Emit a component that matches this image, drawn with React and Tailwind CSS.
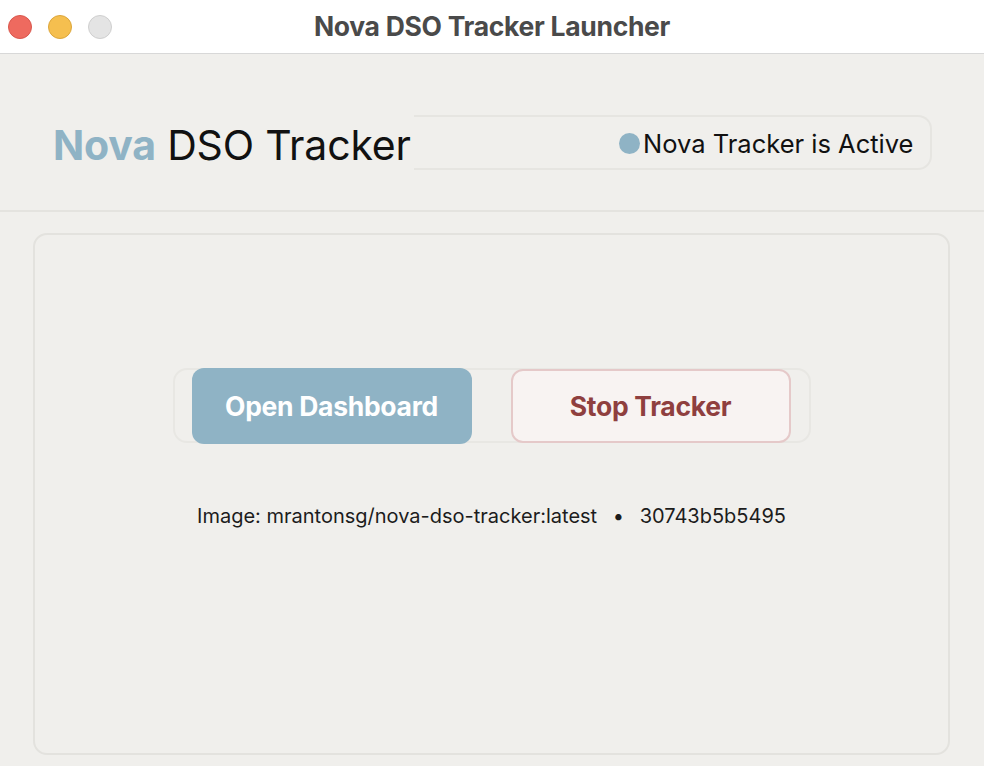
import React from 'react';

const font = { fontFamily: 'Inter, "Noto Sans", sans-serif' };

const TrafficLights = () => (
  <div className="flex items-center gap-4 pl-2 w-[140px]">
    <span className="w-6 h-6 rounded-full bg-[#ee6a5f] border border-[#d9574d]" />
    <span className="w-6 h-6 rounded-full bg-[#f5bf4f] border border-[#dca63b]" />
    <span className="w-6 h-6 rounded-full bg-[#e4e4e4] border border-[#cfcfcf]" />
  </div>
);

export default function App() {
  return (
    <div className="w-[984px] h-[766px] bg-[#f0efec] flex flex-col overflow-hidden" style={font}>
      {/* Title bar */}
      <div className="h-[54px] shrink-0 bg-white border-b border-[#d8d8d8] flex items-center">
        <TrafficLights />
        <div className="flex-1 text-center text-[26.5px] font-bold text-[#4a4a4a] tracking-[-0.3px]">
          Nova DSO Tracker Launcher
        </div>
        <div className="w-[140px]" />
      </div>

      {/* Header */}
      <div className="h-[158px] shrink-0 border-b-2 border-[#e4e3df] flex items-center pl-[53px] pt-[20px]">
        <h1 className="text-[41px] leading-none text-[#111] tracking-[-0.2px] w-[361px] shrink-0 pt-[6px]">
          <span className="font-bold text-[#8fb3c5]">Nova</span> DSO Tracker
        </h1>
        <div className="flex items-stretch h-[55px]">
          <div className="w-[202px] border-y-2 border-[#e6e5e1]" />
          <div className="flex items-center w-[316px] pl-[3px] border-2 border-l-0 border-[#e6e5e1] rounded-r-[14px]">
            <span className="w-[21px] h-[21px] rounded-full bg-[#8fb3c5] shrink-0 mt-[3px]" />
            <span className="ml-[3px] text-[25.5px] text-[#111] pt-[5px]">Nova Tracker is Active</span>
          </div>
        </div>
      </div>

      {/* Main */}
      <div className="flex-1 pt-[21px] pl-[33px] pr-[34px] pb-[11px]">
        <div className="h-full rounded-[14px] border-2 border-[#e3e2de] flex flex-col items-center pt-[133px]">
          <div className="flex items-center justify-between w-[638px] h-[75px] pl-[17px] pr-[18px] border-2 border-[#e8e7e3] rounded-[14px]">
            <button className="w-[280px] h-[76px] rounded-[12px] bg-[#8fb3c5] text-white text-[26.5px] font-bold tracking-[-0.3px] pt-[3px]">
              Open Dashboard
            </button>
            <button className="w-[280px] h-[74px] rounded-[12px] bg-[#f8f3f2] border-2 border-[#e5c9c9] text-[#8f3f3f] text-[26.5px] font-bold tracking-[-0.3px] pt-[3px]">
              Stop Tracker
            </button>
          </div>
          <p className="mt-[58px] text-[20px] text-[#1c1c1c]">
            Image: mrantonsg/nova-dso-tracker:latest <span className="mx-[10px]">•</span> 30743b5b5495
          </p>
        </div>
      </div>
    </div>
  );
}
